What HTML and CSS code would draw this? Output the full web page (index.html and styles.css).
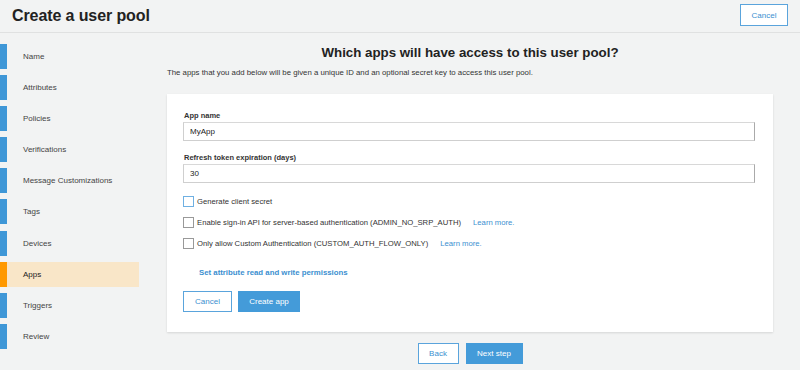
FILE: index.html
```html
<!DOCTYPE html>
<html lang="en">
<head>
  <meta charset="UTF-8" />
  <title>Create a user pool</title>
  <link rel="stylesheet" href="styles.css">
</head>
<body>

  <header class="top-bar">
    <h1>Create a user pool</h1>
    <button class="btn btn-outline">Cancel</button>
  </header>

  <div class="layout">
    <nav class="steps">
      <div class="step">Name</div>
      <div class="step">Attributes</div>
      <div class="step">Policies</div>
      <div class="step">Verifications</div>
      <div class="step">Message Customizations</div>
      <div class="step">Tags</div>
      <div class="step">Devices</div>
      <div class="step active">Apps</div>
      <div class="step">Triggers</div>
      <div class="step">Review</div>
    </nav>

    <main class="content">
      <h2>Which apps will have access to this user pool?</h2>
      <p class="intro">The apps that you add below will be given a unique ID and an optional secret key to access this user pool.</p>

      <div class="card">
        <label class="field-label">App name</label>
        <div class="input">MyApp</div>

        <label class="field-label second">Refresh token expiration (days)</label>
        <div class="input">30</div>

        <div class="checks">
          <div class="check-row">
            <span class="box focus"></span>
            <span>Generate client secret</span>
          </div>
          <div class="check-row">
            <span class="box"></span>
            <span>Enable sign-in API for server-based authentication (ADMIN_NO_SRP_AUTH)</span>
            <a class="learn">Learn more.</a>
          </div>
          <div class="check-row">
            <span class="box"></span>
            <span>Only allow Custom Authentication (CUSTOM_AUTH_FLOW_ONLY)</span>
            <a class="learn">Learn more.</a>
          </div>
        </div>

        <a class="perm-link">Set attribute read and write permissions</a>

        <div class="card-actions">
          <button class="btn btn-outline btn-cancel">Cancel</button>
          <button class="btn btn-primary btn-create">Create app</button>
        </div>
      </div>

      <div class="page-actions">
        <button class="btn btn-outline btn-back">Back</button>
        <button class="btn btn-primary btn-next">Next step</button>
      </div>
    </main>
  </div>

</body>
</html>
```

FILE: styles.css
```css
html, body {
  margin: 0;
  padding: 0;
  height: 100%;
  overflow: hidden;
  font-family: "Liberation Sans", Arial, sans-serif;
  background: #f2f3f3;
  color: #333;
}

.top-bar {
  height: 32px;
  border-bottom: 1px solid #e0e1e1;
  display: flex;
  align-items: center;
  justify-content: space-between;
  padding: 0 12px;
}

.top-bar h1 {
  margin: 0;
  font-size: 16px;
  font-weight: bold;
  color: #222;
  letter-spacing: -0.1px;
}

.top-bar .btn {
  width: 48px;
  height: 22px;
  margin-top: -2px;
}

.btn {
  font-family: inherit;
  font-size: 8px;
  height: 21px;
  padding: 0;
  cursor: pointer;
  box-sizing: border-box;
}

.btn-outline {
  background: #fff;
  color: #3b8fd0;
  border: 1.5px solid #5aa4dc;
}

.btn-primary {
  background: #449bd9;
  color: #fff;
  border: 1px solid #449bd9;
}

.layout {
  display: flex;
}

.steps {
  width: 139px;
  flex-shrink: 0;
  padding-top: 11px;
  display: flex;
  flex-direction: column;
  gap: 6.1px;
}

.step {
  height: 25px;
  display: flex;
  align-items: center;
  border-left: 7px solid #3f97d7;
  padding-left: 16px;
  font-size: 8px;
  color: #444;
}

.step.active {
  border-left-color: #ff9900;
  background: #f9e6c8;
  color: #222;
}

.content {
  flex: 1;
  padding: 0 27px 0 28px;
}

.content h2 {
  margin: 10px 0 0 0;
  text-align: center;
  font-size: 13.3px;
  line-height: 20px;
  font-weight: bold;
  color: #222;
}

.intro {
  margin: 5px 0 0 0;
  font-size: 7.8px;
  line-height: 10px;
  color: #333;
}

.card {
  margin-top: 16px;
  background: #fff;
  box-shadow: 0 1px 2px rgba(0, 0, 0, 0.12);
  padding: 17px 18px 20px 16px;
  display: flex;
  flex-direction: column;
}

.field-label {
  font-size: 7.5px;
  line-height: 10px;
  font-weight: bold;
  color: #333;
  padding-left: 1px;
}

.field-label.second {
  margin-top: 12px;
}

.input {
  margin-top: 1px;
  height: 19px;
  box-sizing: border-box;
  border: 1px solid #cfcfcf;
  border-right-color: #aaa;
  border-top-color: #d8d8d8;
  display: flex;
  align-items: center;
  padding-left: 6px;
  font-size: 8px;
  color: #222;
}

.checks {
  margin-top: 13px;
  display: flex;
  flex-direction: column;
  gap: 11px;
}

.check-row {
  height: 10px;
  display: flex;
  align-items: center;
  font-size: 7.7px;
  color: #333;
}

.box {
  width: 9px;
  height: 9px;
  border: 1px solid #999;
  background: #fff;
  margin-right: 3px;
  flex-shrink: 0;
}

.box.focus {
  border-color: #6fb0e2;
}

.learn {
  margin-left: 12px;
  color: #3b8fd0;
}

.perm-link {
  margin-top: 20px;
  padding-left: 16px;
  font-size: 7.8px;
  line-height: 10px;
  font-weight: bold;
  color: #3b8fd0;
}

.card-actions {
  margin-top: 13px;
  display: flex;
  gap: 6px;
}

.btn-cancel {
  width: 49px;
}

.btn-create {
  width: 62px;
}

.page-actions {
  margin-top: 11px;
  display: flex;
  justify-content: center;
  gap: 7px;
}

.btn-back {
  width: 41px;
}

.btn-next {
  width: 57px;
}
```
